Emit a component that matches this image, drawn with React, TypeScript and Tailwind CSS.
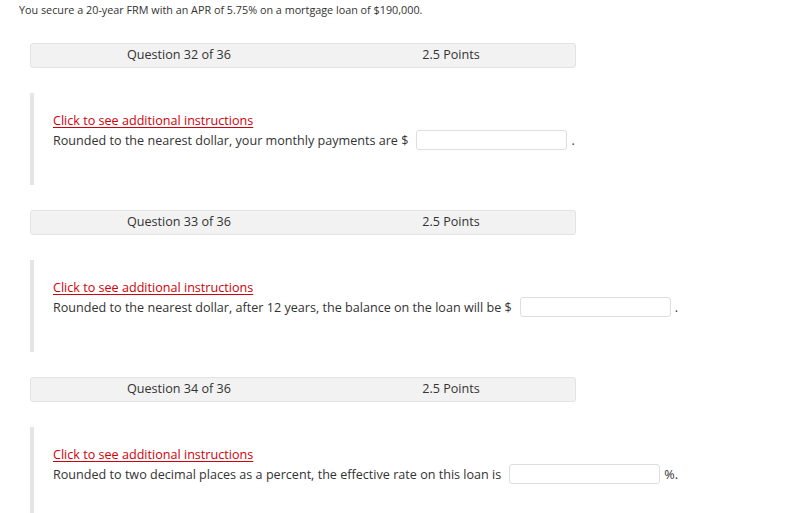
const questions = [
  {
    n: 32,
    text: "Rounded to the nearest dollar, your monthly payments are $",
    suffix: ".",
  },
  {
    n: 33,
    text: "Rounded to the nearest dollar, after 12 years, the balance on the loan will be $",
    suffix: ".",
  },
  {
    n: 34,
    text: "Rounded to two decimal places as a percent, the effective rate on this loan is",
    suffix: "%.",
  },
];

function Question({ n, text, suffix }: { n: number; text: string; suffix: string }) {
  return (
    <div>
      <div className="flex h-[25px] w-[546px] items-center rounded-[3px] border border-[#e3e3e3] bg-[#f2f2f2] pb-[1px] text-[12.6px]">
        <div className="w-[296px] text-center">Question {n} of 36</div>
        <div className="flex-1 text-center">2.5 Points</div>
      </div>
      <div className="mt-[25px] mb-[25px] h-[92px] border-l-4 border-[#e5e5e5] pl-[19px] pt-[18px] text-[12.6px] leading-[19px]">
        <a href="#" className="text-[#d0000a] underline underline-offset-2">
          Click to see additional instructions
        </a>
        <div className="flex items-center">
          <span>{text}</span>
          <span className="ml-[8px] inline-block h-[20px] w-[151px] rounded-[3px] border border-[#dedede] bg-white" />
          <span className="ml-[4px]">{suffix}</span>
        </div>
      </div>
    </div>
  );
}

export default function App() {
  return (
    <div className="h-[513px] overflow-hidden bg-white font-['Open_Sans',sans-serif] text-[#333]">
      <p className="pl-[19px] pt-[3px] text-[10.8px] leading-[14px]">
        You secure a 20-year FRM with an APR of 5.75% on a mortgage loan of $190,000.
      </p>
      <div className="ml-[30px] mt-[26px]">
        {questions.map((q) => (
          <Question key={q.n} {...q} />
        ))}
      </div>
    </div>
  );
}
